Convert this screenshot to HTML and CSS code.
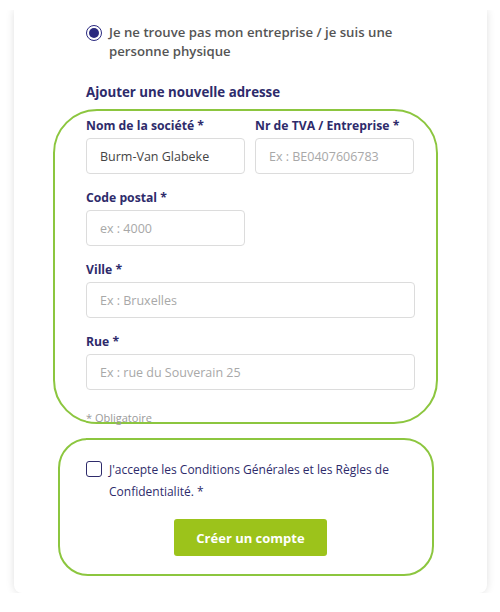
FILE: index.html
```html
<!DOCTYPE html>
<html lang="fr">

<head>
    <meta charset="UTF-8">
    <link rel="stylesheet" href="styles.css">
    <title>Créer un compte</title>
</head>

<body>
    <div class="card">
        <label class="choice">
            <span class="radio"><span class="radio-dot"></span></span>
            <span class="choice-text">Je ne trouve pas mon entreprise / je suis une personne physique</span>
        </label>

        <h2 class="section-title">Ajouter une nouvelle adresse</h2>

        <div class="box box-address">
            <div class="row">
                <div class="field">
                    <label class="label">Nom de la société *</label>
                    <input class="input" type="text" value="Burm-Van Glabeke">
                </div>
                <div class="field">
                    <label class="label">Nr de TVA / Entreprise *</label>
                    <input class="input" type="text" placeholder="Ex : BE0407606783">
                </div>
            </div>
            <div class="row">
                <div class="field">
                    <label class="label">Code postal *</label>
                    <input class="input" type="text" placeholder="ex : 4000">
                </div>
            </div>
            <div class="field">
                <label class="label">Ville *</label>
                <input class="input" type="text" placeholder="Ex : Bruxelles">
            </div>
            <div class="field">
                <label class="label">Rue *</label>
                <input class="input" type="text" placeholder="Ex : rue du Souverain 25">
            </div>
            <p class="required">* Obligatoire</p>
        </div>

        <div class="box box-submit">
            <label class="terms">
                <span class="checkbox"></span>
                <span class="terms-text">J'accepte les Conditions Générales et les Règles de Confidentialité. *</span>
            </label>
            <div class="actions">
                <button class="btn" type="button">Créer un compte</button>
            </div>
        </div>
    </div>
</body>

</html>
```

FILE: styles.css
```css
body {
    margin: 0;
    background-color: #ffffff;
    font-family: "Open Sans", "Noto Sans", sans-serif;
    color: #2e2b6b;
}

.card {
    width: 473px;
    height: 583px;
    margin: 10px 0 0 14px;
    box-sizing: border-box;
    padding: 15px 0 0 0;
    background: #ffffff;
    border-radius: 0 0 8px 8px;
    box-shadow: 0 0 8px rgba(0, 0, 0, 0.13);
    clip-path: inset(0 -20px -20px -20px);
}

.choice {
    display: flex;
    align-items: flex-start;
    margin-left: 72px;
    width: 330px;
}

.radio {
    flex: none;
    width: 16px;
    height: 16px;
    box-sizing: border-box;
    border: 1.5px solid #2b2a7f;
    border-radius: 50%;
    display: flex;
    align-items: center;
    justify-content: center;
}

.radio-dot {
    width: 10px;
    height: 10px;
    border-radius: 50%;
    background: #2b2a7f;
}

.choice-text {
    margin-left: 7px;
    margin-top: -2px;
    font-size: 13.2px;
    font-weight: 600;
    line-height: 19px;
    color: #555555;
}

.section-title {
    margin: 22px 0 0 72px;
    font-size: 13.3px;
    font-weight: 700;
    line-height: 19px;
    color: #2e2b6b;
}

.box {
    border: 2px solid #8cc63f;
    box-sizing: border-box;
}

.box-address {
    width: 385px;
    height: 315px;
    margin: 7px 0 0 39px;
    padding: 6px 21px 0 31px;
    border-radius: 44px;
}

.row {
    display: flex;
    gap: 10px;
}

.row .field {
    width: 159px;
}

.field {
    display: flex;
    flex-direction: column;
    margin-bottom: 15px;
}

.label {
    font-size: 12.2px;
    font-weight: 700;
    line-height: 18px;
    margin-bottom: 3px;
    color: #2e2b6b;
}

.input {
    height: 36px;
    box-sizing: border-box;
    border: 1px solid #dcdcdc;
    border-radius: 4px;
    padding: 0 13px;
    font-family: "Open Sans", "Noto Sans", sans-serif;
    font-size: 12.5px;
    color: #444444;
    background: #ffffff;
}

.input::placeholder {
    color: #a8a8a8;
}

.required {
    margin: 20px 0 0 0;
    font-size: 11px;
    color: #9a9a9a;
}

.box-submit {
    width: 376px;
    height: 138px;
    margin: 14px 0 0 44px;
    padding: 20px 20px 0 29px;
    border-radius: 30px;
}

.terms {
    display: flex;
    align-items: flex-start;
    margin-left: -3px;
}

.checkbox {
    flex: none;
    width: 16px;
    height: 16px;
    margin-top: 1px;
    box-sizing: border-box;
    border: 1.5px solid #2e2b6b;
    border-radius: 3px;
}

.terms-text {
    margin-left: 7px;
    margin-top: -1px;
    font-size: 12px;
    line-height: 22px;
    color: #2e2b6b;
}

.actions {
    display: flex;
    justify-content: center;
    margin-top: 16px;
}

.btn {
    width: 153px;
    height: 37px;
    border: none;
    border-radius: 3px;
    background: #9cc31b;
    color: #ffffff;
    font-family: "Open Sans", "Noto Sans", sans-serif;
    font-size: 13px;
    font-weight: 700;
}
```
